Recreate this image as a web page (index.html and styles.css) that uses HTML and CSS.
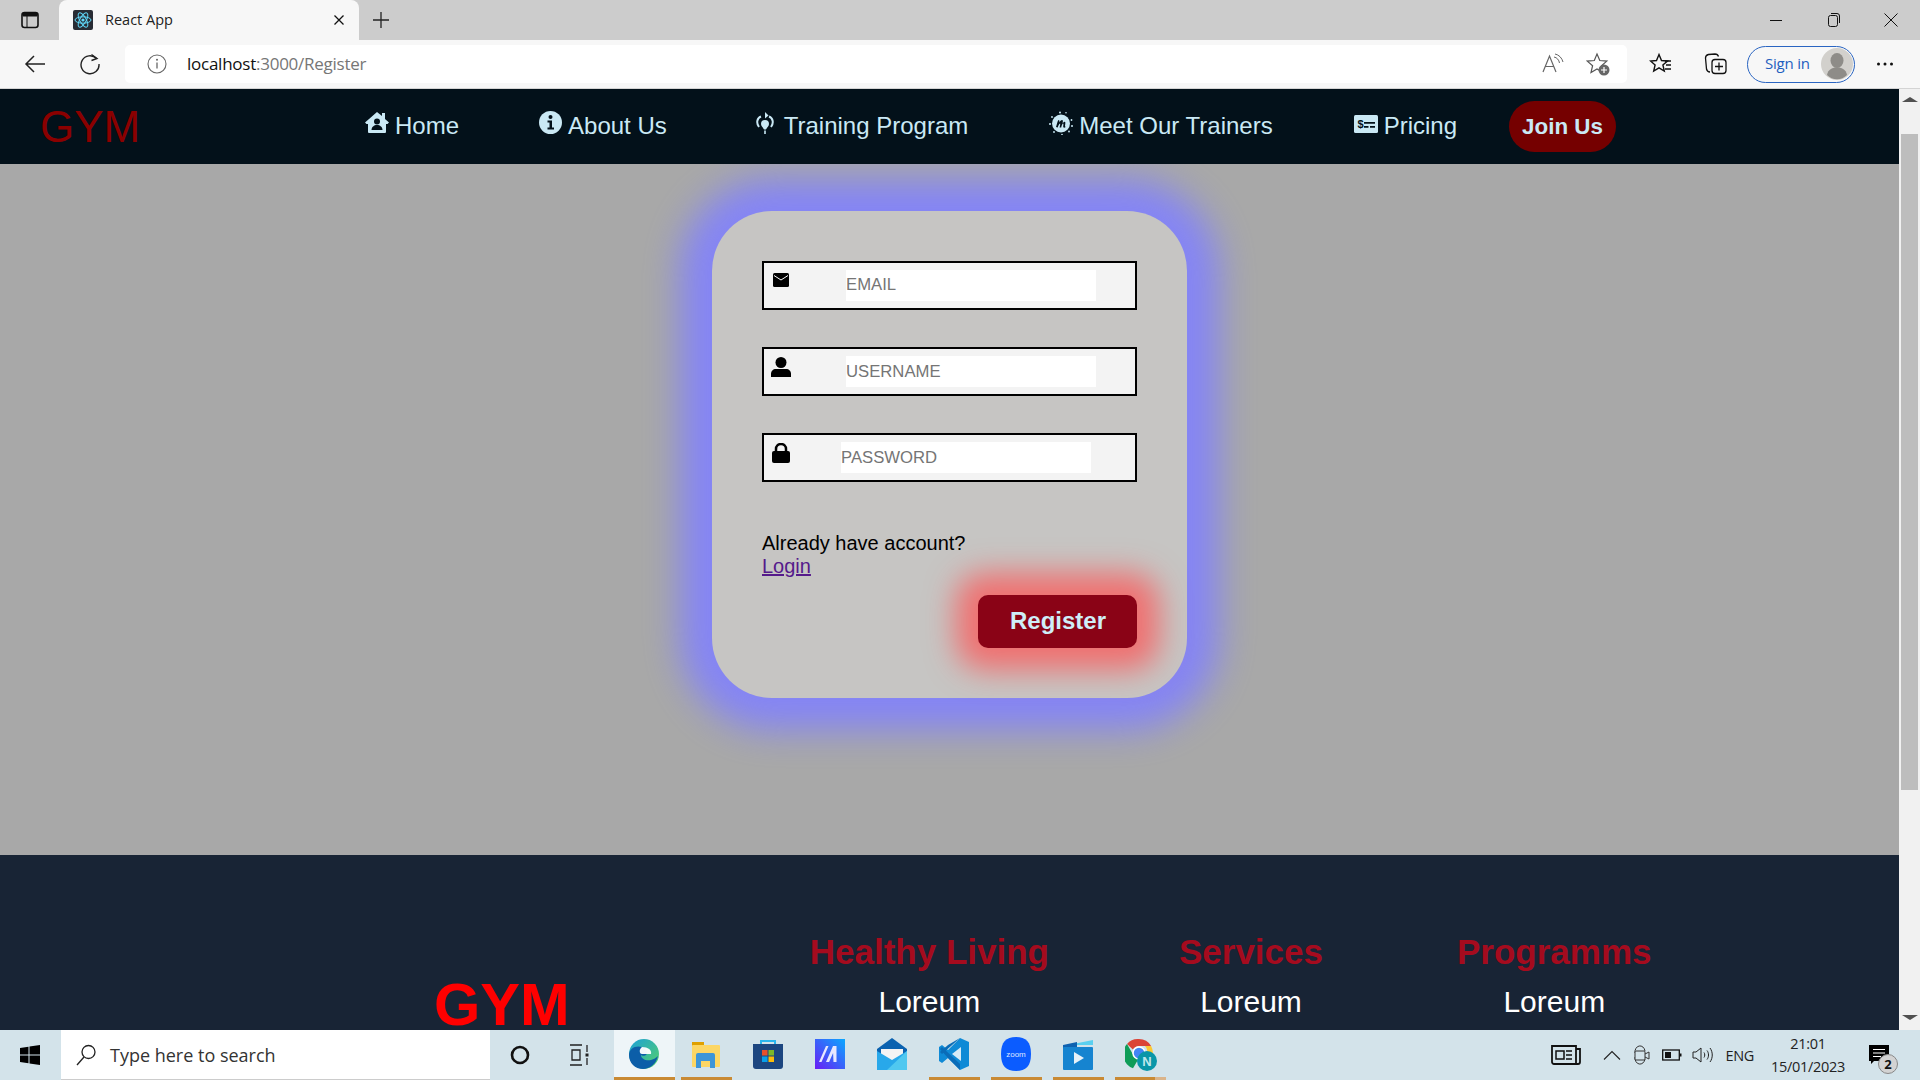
FILE: index.html
```html
<!DOCTYPE html>
<html lang="en">
<head>
<meta charset="utf-8">
<title>React App</title>
<link rel="stylesheet" href="styles.css">
</head>
<body>
<div class="tabstrip">
  <svg class="ts-panel" width="20" height="20" viewBox="0 0 20 20"><rect x="2" y="2.500" width="16" height="15" rx="2.500" fill="none" stroke="#111" stroke-width="1.600"/><path d="M3 3h14v3H3zM7 6v11" fill="#111" stroke="#111" stroke-width="1"/></svg>
  <div class="tab">
    <svg class="favicon" width="20" height="20" viewBox="0 0 20 20"><rect width="20" height="20" rx="2" fill="#282c34"/><g fill="none" stroke="#61dafb" stroke-width="1"><ellipse cx="10" cy="10" rx="8" ry="3.200"/><ellipse cx="10" cy="10" rx="8" ry="3.200" transform="rotate(60 10 10)"/><ellipse cx="10" cy="10" rx="8" ry="3.200" transform="rotate(120 10 10)"/></g><circle cx="10" cy="10" r="1.600" fill="#61dafb"/></svg>
    <span class="tab-title">React App</span>
    <svg class="tab-close" width="12" height="12" viewBox="0 0 12 12"><path d="M1.500 1.500l9 9M10.500 1.500l-9 9" stroke="#111" stroke-width="1.300"/></svg>
  </div>
  <svg class="new-tab" width="18" height="18" viewBox="0 0 18 18"><path d="M9 1v16M1 9h16" stroke="#222" stroke-width="1.300"/></svg>
  <div class="win-controls">
    <svg width="14" height="14" viewBox="0 0 14 14"><path d="M1 7.500h12" stroke="#111" stroke-width="1"/></svg>
    <svg width="14" height="16" viewBox="0 0 14 16"><rect x="1.500" y="3.500" width="9" height="11" rx="2" fill="none" stroke="#111"/><path d="M4 1.500h6a2.500 2.500 0 0 1 2.500 2.500v7" fill="none" stroke="#111"/></svg>
    <svg width="14" height="14" viewBox="0 0 14 14"><path d="M.5.500l13 13M13.500.500l-13 13" stroke="#111" stroke-width="1"/></svg>
  </div>
</div>

<div class="toolbar">
  <svg class="tb-back" width="22" height="22" viewBox="0 0 22 22"><path d="M21 11H2M10 3l-8 8 8 8" fill="none" stroke="#222" stroke-width="1.500"/></svg>
  <svg class="tb-reload" width="22" height="22" viewBox="0 0 22 22"><path d="M17.500 5.500A9 9 0 1 0 20 11" fill="none" stroke="#222" stroke-width="1.400"/><path d="M12.500 1.500l5.500 4-5.500 2" fill="none" stroke="#222" stroke-width="1.400"/></svg>
  <div class="addressbar">
    <svg class="ab-info" width="20" height="20" viewBox="0 0 20 20"><circle cx="10" cy="10" r="9" fill="none" stroke="#666" stroke-width="1.100"/><path d="M10 8.500v6" stroke="#666" stroke-width="1.300"/><circle cx="10" cy="5.800" r="1" fill="#666"/></svg>
    <span class="url"><span class="url-host">localhost</span>:3000/Register</span>
    <svg class="ab-read" width="24" height="22" viewBox="0 0 24 22"><path d="M2 19L8.500 3 15 19M4.500 13.500h8" fill="none" stroke="#666" stroke-width="1.200"/><path d="M14 3c3 .5 5 3 5.500 6M15 0c4 .8 7 4 8 8" transform="translate(-1 1)" fill="none" stroke="#666" stroke-width="1"/></svg>
    <svg class="ab-star" width="24" height="24" viewBox="0 0 24 24"><path d="M11 2l2.800 6.500 7 .6-5.300 4.600 1.600 6.900L11 17l-6 3.600 1.600-6.900L1.300 9.100l7-.6z" fill="none" stroke="#555" stroke-width="1.200"/><circle cx="18" cy="18" r="5.500" fill="#666"/><path d="M18 15v6M15 18h6" stroke="#fff" stroke-width="1.200"/></svg>
  </div>
  <svg class="tb-fav" width="24" height="24" viewBox="0 0 24 24"><path d="M10 2.500l2.500 6 6 .5-4.600 4 1.400 6-5.300-3.200L4.700 19l1.400-6-4.600-4 6-.5z" fill="none" stroke="#111" stroke-width="1.400"/><path d="M16 9h6M17 13h5M16 17h6" stroke="#111" stroke-width="1.300"/></svg>
  <svg class="tb-coll" width="24" height="24" viewBox="0 0 24 24"><path d="M6 20c-2 0-3-1-3.500-3L1.500 6c0-2 1-3 3-3.500L11 2c2 0 3 .8 3.500 2.500" fill="none" stroke="#111" stroke-width="1.300"/><rect x="8" y="7.500" width="14" height="14" rx="3" fill="#f7f7f7" stroke="#111" stroke-width="1.300"/><path d="M15 10.500v8M11 14.500h8" stroke="#111" stroke-width="1.300"/></svg>
  <div class="signin">
    <span class="signin-text">Sign in</span>
    <svg class="avatar" width="32" height="32" viewBox="0 0 32 32"><circle cx="16" cy="16" r="16" fill="#d2d0cc"/><ellipse cx="16" cy="12.500" rx="6.500" ry="7.500" fill="#8e8c88"/><path d="M6 27c1-6 6-7.500 10-7.500S25 21 26 27a14 14 0 0 1-20 0z" fill="#8e8c88"/></svg>
  </div>
  <svg class="tb-more" width="18" height="6" viewBox="0 0 18 6"><circle cx="2.500" cy="3" r="1.500" fill="#111"/><circle cx="9" cy="3" r="1.500" fill="#111"/><circle cx="15.500" cy="3" r="1.500" fill="#111"/></svg>
</div>

<div class="viewport">
  <div class="page">
    <nav class="navbar">
      <a class="brand">GYM</a>
      <ul class="navlinks">
        <li class="navitem"><svg class="navicon" width="24" height="21" viewBox="0 0 24 21"><path d="M12 0l5 4V1h3v6l4 3.500-1.500 1.500H21v8a1 1 0 0 1-1 1H4a1 1 0 0 1-1-1v-8H1.500L0 10.500z" fill="#cae9f5"/><circle cx="12" cy="9.500" r="3" fill="#03111a"/><path d="M6.500 18c0-3 2.500-5 5.500-5s5.500 2 5.500 5z" fill="#03111a"/></svg><span>Home</span></li>
        <li class="navitem"><svg class="navicon" width="23" height="23" viewBox="0 0 23 23"><circle cx="11.500" cy="11.500" r="11.500" fill="#cae9f5"/><circle cx="11.500" cy="6" r="2" fill="#03111a"/><path d="M8.500 9.500h4.500v7h2v2H8.500v-2h2v-5h-2z" fill="#03111a"/></svg><span>About Us</span></li>
        <li class="navitem navitem-training"><svg class="navicon" width="20" height="22" viewBox="0 0 20 22"><path d="M4 15C1 11 2 6 6 4.500M16 15c3-4 2-9-2-10.500" fill="none" stroke="#cae9f5" stroke-width="2"/><path d="M10 0l3.500 3.500L10 6.500z" fill="#cae9f5"/><path d="M10 8a4 4 0 0 1 4 4c0 2-2 3.500-3 5.500h-2C8 15.500 6 14 6 12a4 4 0 0 1 4-4z" fill="#cae9f5"/><path d="M9.200 18.500h1.600V22H9.200z" fill="#cae9f5"/></svg><span>Training Program</span></li>
        <li class="navitem navitem-meet"><svg class="navicon" width="24" height="24" viewBox="0 0 24 24"><circle cx="12" cy="12.500" r="9" fill="#cae9f5"/><g fill="#cae9f5"><circle cx="11" cy="1.500" r="1"/><circle cx="3" cy="6" r=".9"/><circle cx="1" cy="13" r="1"/><circle cx="22.500" cy="9" r=".9"/><circle cx="23" cy="15" r="1"/><circle cx="17" cy="1.800" r=".8"/><circle cx="5" cy="21" r=".9"/><circle cx="13" cy="23.500" r=".8"/><circle cx="20" cy="20.500" r=".9"/></g><path d="M7 16c1-3 1.500-6 2.500-7 1 0 1 1 .7 2.500 1-2 3-3 3.500-2 .5.800-.2 3-.2 3s1-1.800 2.300-1.800c1 0 .4 3 .2 4.300 0 1 .7 1 1 .6-.5 1.300-2.600 1.600-2.800.2 0-1 .5-3 0-3.200-.8 0-1.600 2-2 4h-1.600c.2-1.500 1-4 .4-4.200-.8 0-2 3-2.300 4.200z" fill="#03111a"/></svg><span>Meet Our Trainers</span></li>
        <li class="navitem navitem-pricing"><svg class="navicon" width="24" height="18" viewBox="0 0 24 18"><rect width="24" height="18" rx="1.500" fill="#cae9f5"/><path d="M10 7h11v1.800H10zM10 11h4.500v1.800H10zM16 11h5v1.800h-5z" fill="#03111a"/><text class="pricing-dollar" x="3.500" y="13">$</text></svg><span>Pricing</span></li>
        <li class="joinus">Join Us</li>
      </ul>
    </nav>

    <main class="main">
      <form class="card">
        <div class="field">
          <span class="field-icon field-icon-mail"><svg width="16" height="14" viewBox="0 0 16 14"><rect width="16" height="14" rx="1.500" fill="#000"/><path d="M1 2.500l7 4.500 7-4.500" fill="none" stroke="#fff" stroke-width="1"/></svg></span>
          <input class="field-input field-input-mail" type="text" placeholder="EMAIL">
        </div>
        <div class="field">
          <span class="field-icon"><svg width="20" height="20" viewBox="0 0 20 20"><circle cx="10" cy="5.500" r="5.500" fill="#000"/><path d="M0 20v-3c0-3 2-5 5-5h10c3 0 5 2 5 5v3z" fill="#000"/></svg></span>
          <input class="field-input" type="text" placeholder="USERNAME">
        </div>
        <div class="field">
          <span class="field-icon"><svg width="18" height="20" viewBox="0 0 18 20"><path d="M4 9V6a5 5 0 0 1 10 0v3" fill="none" stroke="#000" stroke-width="2.500"/><rect y="8" width="18" height="12" rx="2" fill="#000"/></svg></span>
          <input class="field-input field-input-pass" type="password" placeholder="PASSWORD">
        </div>
        <p class="already">Already have account?<br><a class="login" href="#">Login</a></p>
        <div class="actions"><button class="register" type="button">Register</button></div>
      </form>
    </main>

    <footer class="footer">
      <div class="foot-brand">GYM</div>
      <div class="foot-col"><h3>Healthy Living</h3><p>Loreum</p></div>
      <div class="foot-col"><h3>Services</h3><p>Loreum</p></div>
      <div class="foot-col foot-col-last"><h3>Programms</h3><p>Loreum</p></div>
    </footer>
  </div>
  <div class="scrollbar">
    <span class="arrow-up"></span>
    <span class="thumb"></span>
    <span class="arrow-down"></span>
  </div>
</div>

<div class="taskbar">
  <div class="start"><svg width="20" height="20" viewBox="0 0 20 20"><path d="M0 3l8.500-1.200V9.500H0zM9.500 1.600L20 0v9.500H9.500zM0 10.500h8.500v7.700L0 17zM9.500 10.500H20V20L9.500 18.400z" fill="#000"/></svg></div>
  <div class="search">
    <svg width="20" height="22" viewBox="0 0 20 22"><circle cx="12.500" cy="8" r="6.500" fill="none" stroke="#222" stroke-width="1.300"/><path d="M8 13L1 21" stroke="#222" stroke-width="1.300"/></svg>
    <span>Type here to search</span>
  </div>
  <div class="tb-sys">
    <svg width="20" height="20" viewBox="0 0 20 20"><circle cx="10" cy="10" r="8" fill="none" stroke="#111" stroke-width="2.600"/></svg>
  </div>
  <div class="tb-sys tb-sys-task">
    <svg width="20" height="22" viewBox="0 0 20 22"><path d="M1 1h12M1 21h12M3 6h8v10H3zM18 1v7M18 14v7" fill="none" stroke="#222" stroke-width="1.300"/><rect x="16.500" y="9.500" width="3" height="3" fill="#222"/></svg>
  </div>
  <div class="apps">
    <div class="app app-active"><svg width="32" height="32" viewBox="0 0 32 32"><defs><linearGradient id="eg" x1="0" y1="0" x2="1" y2="1"><stop offset="0" stop-color="#1aa0d8"/><stop offset="1" stop-color="#58d268"/></linearGradient></defs><circle cx="16" cy="16" r="15" fill="url(#eg)"/><path d="M1 17c0-7 7-10 13-8 5 2 6 6 4 8-1 1-4 1-5 0 0 4 5 6 10 5 3-1 5-2 7-4-2 8-8 13-15 13C7 31 1 25 1 17z" fill="#0c5ea8"/><path d="M14 9c6 0 10 3 9 7h-9c-3 0-3-5 0-7z" fill="#fff" opacity=".95"/></svg></div>
    <div class="app app-run"><svg width="30" height="28" viewBox="0 0 30 28"><path d="M1 2h12v5H1z" fill="#dfa000"/><rect x="1" y="5" width="28" height="22" rx="1" fill="#fcd664"/><path d="M5 28V15a2 2 0 0 1 2-2h15a2 2 0 0 1 2 2v13h-5v-7h-9v7z" fill="#3d95d8"/></svg></div>
    <div class="app"><svg width="30" height="32" viewBox="0 0 30 32"><path d="M8 7V3h14v4" fill="none" stroke="#2bb6ee" stroke-width="2"/><path d="M0 6h30v22a3 3 0 0 1-3 3H3a3 3 0 0 1-3-3z" fill="#1c4680"/><rect x="9" y="12" width="5.500" height="5.500" fill="#e8502a"/><rect x="15.500" y="12" width="5.500" height="5.500" fill="#7cb82a"/><rect x="9" y="18.500" width="5.500" height="5.500" fill="#08a0ea"/><rect x="15.500" y="18.500" width="5.500" height="5.500" fill="#fbbc0a"/></svg></div>
    <div class="app"><svg width="30" height="30" viewBox="0 0 30 30"><defs><linearGradient id="mg" x1="0" y1="1" x2="1" y2="0"><stop offset="0" stop-color="#6a1cf5"/><stop offset="1" stop-color="#0aa8ff"/></linearGradient></defs><rect width="30" height="30" fill="url(#mg)"/><path d="M4 23L11 7h2.500L6.500 23zM11 23l7-16h3.500v16h-3l-.4-9-4 9z" fill="#e8e8ff"/></svg></div>
    <div class="app"><svg width="30" height="32" viewBox="0 0 30 32"><path d="M15 0l15 11v21H0V11z" fill="#0a62b0"/><path d="M4 11h22v6l-11 7-11-7z" fill="#f4f4f4"/><path d="M0 13l15 9 15-9v19H0z" fill="#28a8ea"/><path d="M30 13v19H10z" fill="#50c8f0"/></svg></div>
    <div class="app app-run"><svg width="30" height="32" viewBox="0 0 30 32"><path d="M21 0l9 4v24l-9 4-12-12-6 5-3-2V9l3-2 6 5z" fill="#0f8ad6"/><path d="M22 9v14l-9-7z" fill="#d6eaf6"/><path d="M1 11l2-2 18 17v6L9 20z" fill="#0a6cb8"/><path d="M21 0L3 16 1 14 9 7z" fill="#0a6cb8"/></svg></div>
    <div class="app app-run"><svg class="app-zoom" width="30" height="34" viewBox="0 0 30 34"><path d="M15 0c10 0 15 5 15 17s-5 17-15 17S0 29 0 17 5 0 15 0z" fill="#0b5cff"/><text class="zoom-word" x="15" y="19.500" text-anchor="middle">zoom</text></svg></div>
    <div class="app app-run"><svg width="30" height="32" viewBox="0 0 30 32"><path d="M0 8l30-6v5H0z" fill="#5ad0f0"/><path d="M0 7l14-3v7H0z" fill="#0f62b0"/><rect y="9" width="30" height="23" rx="1" fill="#1684d0"/><path d="M11 14l10 6-10 6z" fill="#e8f2f8"/></svg></div>
    <div class="app app-chrome"><svg width="32" height="34" viewBox="0 0 32 34"><path d="M14 2a14 14 0 0 1 12.100 7H14a7 7 0 0 0-6.100 3.500L2 7a14 14 0 0 1 12-5z" fill="#db4437"/><path d="M2 7l6 10.500a7 7 0 0 0 6 3.500l-6 10.300A15 15 0 0 1 2 7z" fill="#0f9d58"/><path d="M26.100 9A14 14 0 0 1 14 30l6-10.500A7 7 0 0 0 20 9z" fill="#fcc934"/><circle cx="14" cy="16" r="6" fill="#4285f4" stroke="#fff" stroke-width="1.500"/><circle cx="22" cy="24" r="10" fill="#0a96a8"/><text class="chrome-n" x="22" y="29" text-anchor="middle">N</text></svg></div>
  </div>
  <div class="tray">
    <svg class="tray-news" width="30" height="20" viewBox="0 0 30 20"><path d="M1 1h24v18H3a2 2 0 0 1-2-2zM25 4h4v13a2 2 0 0 1-2 2h-2" fill="none" stroke="#111" stroke-width="1.800"/><path d="M5 6h8v8H5z" fill="none" stroke="#111" stroke-width="1.500"/><path d="M15 6h6M15 10h6M15 14h6" stroke="#111" stroke-width="1.500"/></svg>
    <svg class="tray-chev" width="18" height="10" viewBox="0 0 18 10"><path d="M1 9.500l8-8 8 8" fill="none" stroke="#222" stroke-width="1.100"/></svg>
    <svg class="tray-cam" width="16" height="20" viewBox="0 0 16 20"><path d="M1 8a5 6 0 0 1 10-2M1 12a5 6 0 0 0 10 2" fill="none" stroke="#333" stroke-width="1"/><rect x="1" y="6" width="10" height="9" rx="1" fill="#d3e3ea" stroke="#333"/><path d="M11 9l4-2v7l-4-2" fill="none" stroke="#333"/></svg>
    <svg class="tray-bat" width="20" height="12" viewBox="0 0 20 12"><rect x=".7" y="1" width="16.600" height="10" fill="none" stroke="#111" stroke-width="1.300"/><rect x="3" y="3" width="6" height="6" fill="#111"/><rect x="18" y="4.500" width="1.500" height="3" fill="#111"/></svg>
    <svg class="tray-vol" width="22" height="18" viewBox="0 0 22 18"><path d="M1 6h3l5-4v14l-5-4H1z" fill="none" stroke="#222"/><path d="M12 6.500c1 1.500 1 3.500 0 5M15 4.500c2 2.500 2 6.500 0 9M18 2c3 4 3 10 0 14" fill="none" stroke="#222"/></svg>
    <span class="tray-lang">ENG</span>
    <div class="clock"><span>21:01</span><span>15/01/2023</span></div>
    <div class="notif">
      <svg width="22" height="20" viewBox="0 0 22 20"><path d="M0 0h20v16H5l-3 3v-3H0z" fill="#000"/><path d="M4 4.500h12M4 8h12M4 11.500h8" stroke="#fff" stroke-width="1"/></svg>
      <span class="notif-badge">2</span>
    </div>
  </div>
</div>
</body>
</html>
```
FILE: styles.css
```css
* { box-sizing: border-box; }
html, body { margin: 0; padding: 0; width: 1920px; height: 1080px; overflow: hidden; }
body { display: flex; flex-direction: column; font-family: "Liberation Sans", Arial, sans-serif; background: #ccc; }
svg { display: block; flex: none; }

/* browser chrome */
.tabstrip { height: 40px; background: #cccccc; display: flex; align-items: center; flex: none; }
.ts-panel { margin-left: 20px; }
.tab { margin-left: 19px; width: 300px; height: 40px; background: #f7f7f7; border-radius: 8px 8px 0 0; display: flex; align-items: center; padding-left: 14px; }
.tab-title { margin-left: 12px; padding-bottom: 2px; font: 14.500px "Open Sans", sans-serif; color: #222; }
.tab-close { margin-left: auto; margin-right: 14px; }
.new-tab { margin-left: 13px; }
.win-controls { margin-left: auto; display: flex; align-items: center; gap: 43px; padding-right: 22px; }
.win-controls svg:first-child { margin-right: 1px; }

.toolbar { height: 49px; flex: none; background: #f7f7f7; border-bottom: 1px solid #d4d4d4; display: flex; align-items: center; }
.tb-back { margin-left: 24px; }
.tb-reload { margin-left: 33px; }
.addressbar { margin-left: 24px; width: 1502px; height: 38px; background: #fff; border-radius: 5px; display: flex; align-items: center; padding-left: 22px; }
.url { margin-left: 20px; padding-bottom: 2px; font: 17px "Open Sans", sans-serif; letter-spacing: -.25px; color: #767676; }
.url-host { color: #111; }
.ab-read { margin-left: auto; }
.ab-star { margin-left: 21px; margin-right: 17px; }
.tb-fav { margin-left: 22px; }
.tb-coll { margin-left: 31px; }
.signin { margin-left: 19px; width: 108px; height: 37px; border: 1.500px solid #2a65c2; border-radius: 19px; display: flex; align-items: center; padding-left: 17px; }
.signin-text { padding-bottom: 2px; font: 15px "Open Sans", sans-serif; letter-spacing: -.2px; color: #1f5fbf; }
.avatar { margin-left: auto; margin-right: 1px; }
.tb-more { margin-left: 21px; }

.viewport { height: 941px; flex: none; display: flex; }
.page { width: 1899px; height: 941px; overflow: hidden; display: flex; flex-direction: column; }
.scrollbar { width: 21px; background: #f1f1f1; display: flex; flex-direction: column; align-items: center; padding-top: 8px; }
.arrow-up { width: 0; height: 0; border-left: 8px solid transparent; border-right: 8px solid transparent; border-bottom: 5px solid #505050; }
.thumb { width: 17px; height: 656px; margin-top: 32px; background: #bdbdbd; }
.arrow-down { width: 0; height: 0; margin-top: 225px; border-left: 8px solid transparent; border-right: 8px solid transparent; border-top: 5px solid #505050; }

/* navbar */
.navbar { height: 75px; flex: none; background: #03111a; display: flex; align-items: center; position: relative; z-index: 1; }
.brand { margin-left: 40px; width: 325px; font-size: 44px; color: #8b0000; line-height: 50px; }
.navlinks { list-style: none; margin: 0; padding: 0; display: flex; align-items: center; gap: 80px; }
.navitem { display: flex; align-items: center; gap: 6px; font-size: 24px; line-height: 28px; color: #cae9f5; padding-bottom: 2px; }
.navicon { margin-bottom: 6px; }
.navitem-training { margin-left: 8px; gap: 9px; }
.navitem-meet { margin-left: 1px; }
.navitem-pricing { margin-left: 1px; margin-right: -28px; }
.navitem-pricing .navicon { margin-bottom: 3px; }
.pricing-dollar { font-size: 11px; font-weight: 700; fill: #03111a; }
.joinus { width: 107px; height: 51px; border-radius: 26px; background: #750000; color: #cae9f5; font-size: 22.400px; font-weight: 700; display: flex; align-items: center; justify-content: center; }

/* main */
.main { height: 691px; flex: none; background: #a8a8a8; display: flex; justify-content: center; padding-top: 47px; }
.card { width: 475px; height: 487px; padding: 50px; background: #c6c5c3; border-radius: 60px; box-shadow: 0 0 35px 32px #8585f5; }
.field { height: 49px; border: 2px solid #000; background: #f3f3f3; display: flex; align-items: flex-start; margin-bottom: 37px; }
.field-icon { width: 34px; margin-top: 8px; display: flex; justify-content: center; }
.field-icon-mail { margin-top: 10px; }
.field-input { margin: 7px 0 0 48px; width: 250px; height: 31px; padding: 0; border: 0; background: #fff; font: 16.700px "Liberation Sans", sans-serif; outline: 0; }
.field-input-mail { padding-bottom: 2px; }
.field-input-pass { margin-left: 43px; }
.already { margin: 50px 0 0; font-size: 20px; line-height: 23px; color: #000; }
.login { color: #551a8b; text-decoration: underline; }
.actions { display: flex; justify-content: flex-end; margin-top: 17px; }
.register { width: 159px; height: 53px; padding: 0 0 2px 1px; border: 0; border-radius: 10px; background: #8a0316; color: #cfeef8; font: 700 24px "Liberation Sans", sans-serif; box-shadow: 0 0 30px 22px #f07070; }

/* footer */
.footer { height: 175px; flex: none; background: #182435; display: flex; overflow: hidden; }
.foot-brand { margin: 117px 240px 0 434px; font-size: 59.600px; font-weight: 700; line-height: 66px; color: #ff0000; }
.foot-col { text-align: center; padding-top: 77px; margin-right: 130px; }
.foot-col-last { margin-left: 4px; }
.foot-col h3 { margin: 0; font-size: 35px; line-height: 40px; font-weight: 700; color: #a50b1e; }
.foot-col p { margin: 13px 0 0; font-size: 30px; line-height: 34px; color: #fff; }

/* taskbar */
.taskbar { height: 50px; flex: none; background: #d3e3ea; display: flex; align-items: stretch; }
.start { width: 61px; padding-right: 2px; display: flex; align-items: center; justify-content: center; }
.search { width: 429px; background: #fff; border-bottom: 1px solid #ccc; display: flex; align-items: center; padding-left: 15px; gap: 14px; font: 18px "Open Sans", sans-serif; color: #333; }
.tb-sys { width: 60px; display: flex; align-items: center; justify-content: center; }
.tb-sys-task { margin-right: 4px; padding-right: 2px; }
.apps { display: flex; }
.app { width: 61px; height: 50px; margin-right: 1px; padding: 0 2px 3px 0; display: flex; align-items: center; justify-content: center; }
.app-active { background: #eef5f8 linear-gradient(#c98a34, #c98a34) center bottom / 100% 3px no-repeat; }
.app-run { background: linear-gradient(#c98a34, #c98a34) center bottom / 51px 3px no-repeat; }
.app-chrome { padding-right: 0; background: linear-gradient(90deg, #c98a34 0 40px, #dab48a 40px 51px) center bottom / 51px 3px no-repeat; }
.zoom-word { font-size: 8px; fill: #dfe8ff; font-family: "Liberation Sans", sans-serif; }
.chrome-n { font-size: 13px; font-weight: 700; fill: #bde8ec; font-family: "Liberation Sans", sans-serif; }
.tray { margin-left: auto; display: flex; align-items: center; padding-right: 29px; color: #222; }
.tray-chev { margin-left: 22px; }
.tray-cam { margin-left: 13px; }
.tray-bat { margin-left: 12px; }
.tray-vol { margin-left: 10px; }
.tray-lang { margin-left: 11px; font: 14.500px "Open Sans", sans-serif; letter-spacing: -.3px; }
.clock { margin-left: 17px; display: flex; flex-direction: column; align-items: center; font: 14.500px/23px "Open Sans", sans-serif; letter-spacing: -.3px; }
.notif { margin-left: 24px; position: relative; }
.notif-badge { position: absolute; left: 9px; top: 9px; width: 20px; height: 20px; border-radius: 50%; background: #d3d3d3; border: 1px solid #888; font: 700 13px/18px "Open Sans", sans-serif; text-align: center; color: #111; }
```
